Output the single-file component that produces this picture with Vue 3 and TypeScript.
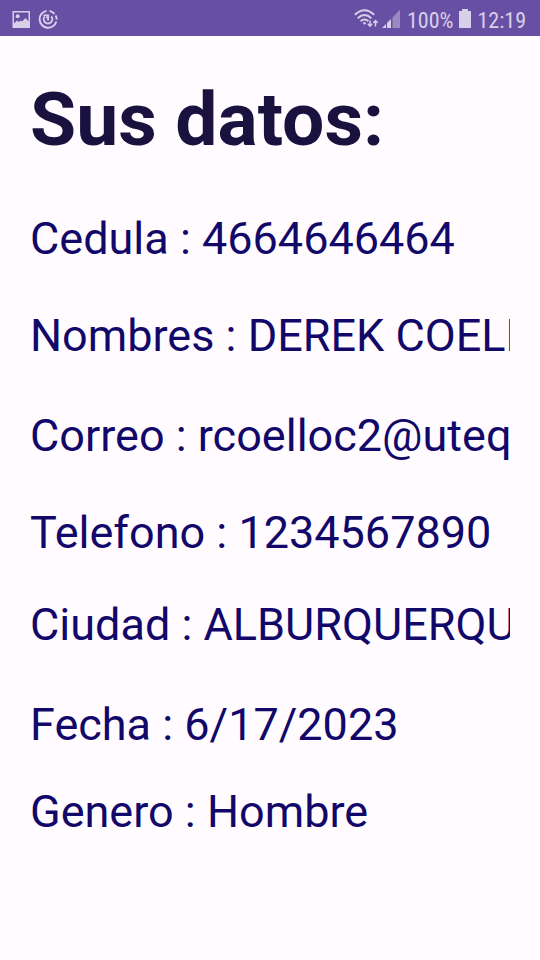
<script setup lang="ts">
interface Field { label: string; value: string; gap: 'tight' | 'narrow' | 'normal' | 'wide' }

const fields: Field[] = [
  { label: 'Cedula', value: '4664646464', gap: 'normal' },
  { label: 'Nombres', value: 'DEREK COELLO', gap: 'wide' },
  { label: 'Correo', value: 'rcoelloc2@uteq', gap: 'normal' },
  { label: 'Telefono', value: '1234567890', gap: 'narrow' },
  { label: 'Ciudad', value: 'ALBURQUERQU', gap: 'wide' },
  { label: 'Fecha', value: '6/17/2023', gap: 'tight' },
  { label: 'Genero', value: 'Hombre', gap: 'normal' },
]
</script>

<template>
  <div class="screen">
    <header class="status">
      <div class="group">
        <svg width="18" height="18" viewBox="0 0 18 18" fill="currentColor" aria-hidden="true">
          <path fill-rule="evenodd" d="M.5 1h17.500v17H.5zM2 2.500v11l3-3 2 1.500 1.500-1.500 1.500 1 3.500-3.500 3 3.500V2.500z" />
          <circle cx="5.700" cy="6.300" r="2" />
        </svg>
        <svg width="20" height="20" viewBox="0 0 20 20" fill="none" stroke="currentColor" stroke-width="1.900" aria-hidden="true">
          <path d="M8.500 1.900A8.500 8.500 0 1 0 18.300 12.500M11.500 1.900A8.500 8.500 0 0 1 16.500 4.900M17.600 6.500A8.500 8.500 0 0 1 18.700 10.500" />
          <path d="M6.800 7.300a4.300 4.300 0 1 0 6.400 0M10.100 5.500v6" />
          <path d="M5.500 6.200h3.500v3.300" stroke-width="1.500" />
        </svg>
      </div>
      <div class="group right">
        <svg width="47" height="20" viewBox="0 0 47 20" fill="none" stroke="currentColor" stroke-width="1.900" aria-hidden="true">
          <path d="M.8 5.800q9.700-9.300 19.400 0M3.700 9.200q6.800-6.200 13.600 0M6.600 12.200q3.900-3.300 7.800 0" />
          <circle cx="10.500" cy="14.200" r="1.300" fill="currentColor" stroke="none" />
          <path d="M16 11.500v5.500M13.800 14.800l2.200 2.500 2.200-2.500M21.500 17.500V12M19.300 14l2.200-2.500 2.200 2.500" stroke-width="1.400" />
          <g fill="currentColor" stroke="none">
            <path d="M28 19l4-4v4zM33 14l4-4v9h-4z" />
            <path d="M38.500 8.500L46 .5V19h-7.500z" opacity=".45" />
          </g>
        </svg>
        <span>100%</span>
        <svg width="12" height="20" viewBox="0 0 12 20" fill="currentColor" aria-hidden="true"><path d="M0 2h3V0h6v2h3v17H0z" /></svg>
        <span>12:19</span>
      </div>
    </header>
    <main class="content">
      <h1>Sus datos:</h1>
      <p v-for="f in fields" :key="f.label" :class="['field', f.gap]">{{ f.label }} : {{ f.value }}</p>
    </main>
  </div>
</template>

<style>
body { margin: 0; background: #fffbff; }
</style>

<style scoped>
.screen { min-height: 100vh; background: #fffbff; font-family: Roboto, sans-serif; }
.status { display: flex; justify-content: space-between; align-items: center; height: 36px; padding: 2px 14px 0 12px; box-sizing: border-box; background: #6750a4; color: #d8d0e8; font-family: "Roboto Condensed", Roboto, sans-serif; font-size: 22px; }
.status span { padding-top: 2px; }
.group { display: flex; align-items: center; gap: 8px; }
.right { gap: 6px; }
.content { padding: 39px 30px 0; }
h1 { margin: 0 0 50px; font-size: 75px; line-height: 88px; color: #19123f; white-space: nowrap; }
.field { margin: 0; font-size: 45px; line-height: 52px; color: #12086a; white-space: nowrap; overflow: hidden; }
.tight { margin-bottom: 35px; }
.narrow { margin-bottom: 40px; }
.normal { margin-bottom: 45px; }
.wide { margin-bottom: 48px; }
</style>
